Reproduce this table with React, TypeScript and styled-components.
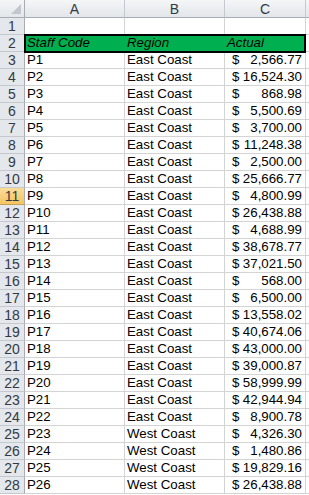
import React from "react";
import styled, { createGlobalStyle } from "styled-components";

interface Row {
  code: string;
  region: string;
  actual: string;
}

const rows: Row[] = [
  { code: "P1", region: "East Coast", actual: "2,566.77" },
  { code: "P2", region: "East Coast", actual: "16,524.30" },
  { code: "P3", region: "East Coast", actual: "868.98" },
  { code: "P4", region: "East Coast", actual: "5,500.69" },
  { code: "P5", region: "East Coast", actual: "3,700.00" },
  { code: "P6", region: "East Coast", actual: "11,248.38" },
  { code: "P7", region: "East Coast", actual: "2,500.00" },
  { code: "P8", region: "East Coast", actual: "25,666.77" },
  { code: "P9", region: "East Coast", actual: "4,800.99" },
  { code: "P10", region: "East Coast", actual: "26,438.88" },
  { code: "P11", region: "East Coast", actual: "4,688.99" },
  { code: "P12", region: "East Coast", actual: "38,678.77" },
  { code: "P13", region: "East Coast", actual: "37,021.50" },
  { code: "P14", region: "East Coast", actual: "568.00" },
  { code: "P15", region: "East Coast", actual: "6,500.00" },
  { code: "P16", region: "East Coast", actual: "13,558.02" },
  { code: "P17", region: "East Coast", actual: "40,674.06" },
  { code: "P18", region: "East Coast", actual: "43,000.00" },
  { code: "P19", region: "East Coast", actual: "39,000.87" },
  { code: "P20", region: "East Coast", actual: "58,999.99" },
  { code: "P21", region: "East Coast", actual: "42,944.94" },
  { code: "P22", region: "East Coast", actual: "8,900.78" },
  { code: "P23", region: "West Coast", actual: "4,326.30" },
  { code: "P24", region: "West Coast", actual: "1,480.86" },
  { code: "P25", region: "West Coast", actual: "19,829.16" },
  { code: "P26", region: "West Coast", actual: "26,438.88" },
];

const GlobalStyle = createGlobalStyle`
  html, body {
    margin: 0;
    padding: 0;
    background: #ffffff;
    overflow: hidden;
  }
`;

const Sheet = styled.div`
  position: relative;
  display: grid;
  grid-template-columns: 25px 100px 100px 81px 1fr;
  grid-auto-rows: 17px;
  grid-template-rows: 18px;
  width: 309px;
  font-family: "Liberation Sans", Arial, sans-serif;
  font-size: 13.3px;
  color: #000;
`;

const Corner = styled.div`
  position: relative;
  background: linear-gradient(#f4f6f8, #e3e6ea);
  border-right: 1px solid #a9adb3;
  border-bottom: 1px solid #a9adb3;

  &::after {
    content: "";
    position: absolute;
    right: 3px;
    bottom: 3px;
    border-style: solid;
    border-width: 0 0 10px 10px;
    border-color: transparent transparent #c3c7cc transparent;
  }
`;

const ColHead = styled.div`
  display: flex;
  align-items: center;
  justify-content: center;
  background: linear-gradient(#f4f6f8, #e3e6ea);
  border-right: 1px solid #c5c9ce;
  border-bottom: 1px solid #a9adb3;
  font-family: "Liberation Sans", Arial, sans-serif;
  font-size: 14px;
  color: #333a44;
  padding-top: 1px;
`;

const RowHead = styled.div<{ $active?: boolean }>`
  display: flex;
  align-items: flex-end;
  justify-content: center;
  background: ${(p) =>
    p.$active ? "linear-gradient(#fbdc97, #f3c564)" : "#e4e7eb"};
  border-right: 1px solid #a9adb3;
  border-bottom: 1px solid ${(p) => (p.$active ? "#c9a24e" : "#c5c9ce")};
  font-size: 14px;
  line-height: 16px;
  color: #333a44;
`;

const Cell = styled.div<{ $head?: boolean }>`
  display: flex;
  align-items: flex-end;
  background: ${(p) => (p.$head ? "#00b050" : "#ffffff")};
  border-right: 1px solid ${(p) => (p.$head ? "#00b050" : "#d4d4d4")};
  border-bottom: 1px solid #d4d4d4;
  padding: 0 2px;
  line-height: 16px;
  font-style: ${(p) => (p.$head ? "italic" : "normal")};
  white-space: nowrap;
  overflow: hidden;
`;

const Money = styled(Cell)`
  justify-content: space-between;
  padding: 0 3px 0 7px;
`;

const HeaderBox = styled.div`
  position: absolute;
  left: 24px;
  top: 34px;
  width: 282px;
  height: 19px;
  box-sizing: border-box;
  border: 2px solid #000;
  pointer-events: none;
`;

const App: React.FC = () => {
  return (
    <>
      <GlobalStyle />
      <Sheet>
        <Corner />
        <ColHead>A</ColHead>
        <ColHead>B</ColHead>
        <ColHead>C</ColHead>
        <ColHead />

        <RowHead>1</RowHead>
        <Cell />
        <Cell />
        <Cell />
        <Cell />

        <RowHead>2</RowHead>
        <Cell $head>Staff Code</Cell>
        <Cell $head>Region</Cell>
        <Cell $head>Actual</Cell>
        <Cell />

        {rows.map((r, i) => (
          <React.Fragment key={r.code}>
            <RowHead $active={i + 3 === 11}>{i + 3}</RowHead>
            <Cell>{r.code}</Cell>
            <Cell>{r.region}</Cell>
            <Money>
              <span>$</span>
              <span>{r.actual}</span>
            </Money>
            <Cell />
          </React.Fragment>
        ))}
        <HeaderBox />
      </Sheet>
    </>
  );
};

export default App;
